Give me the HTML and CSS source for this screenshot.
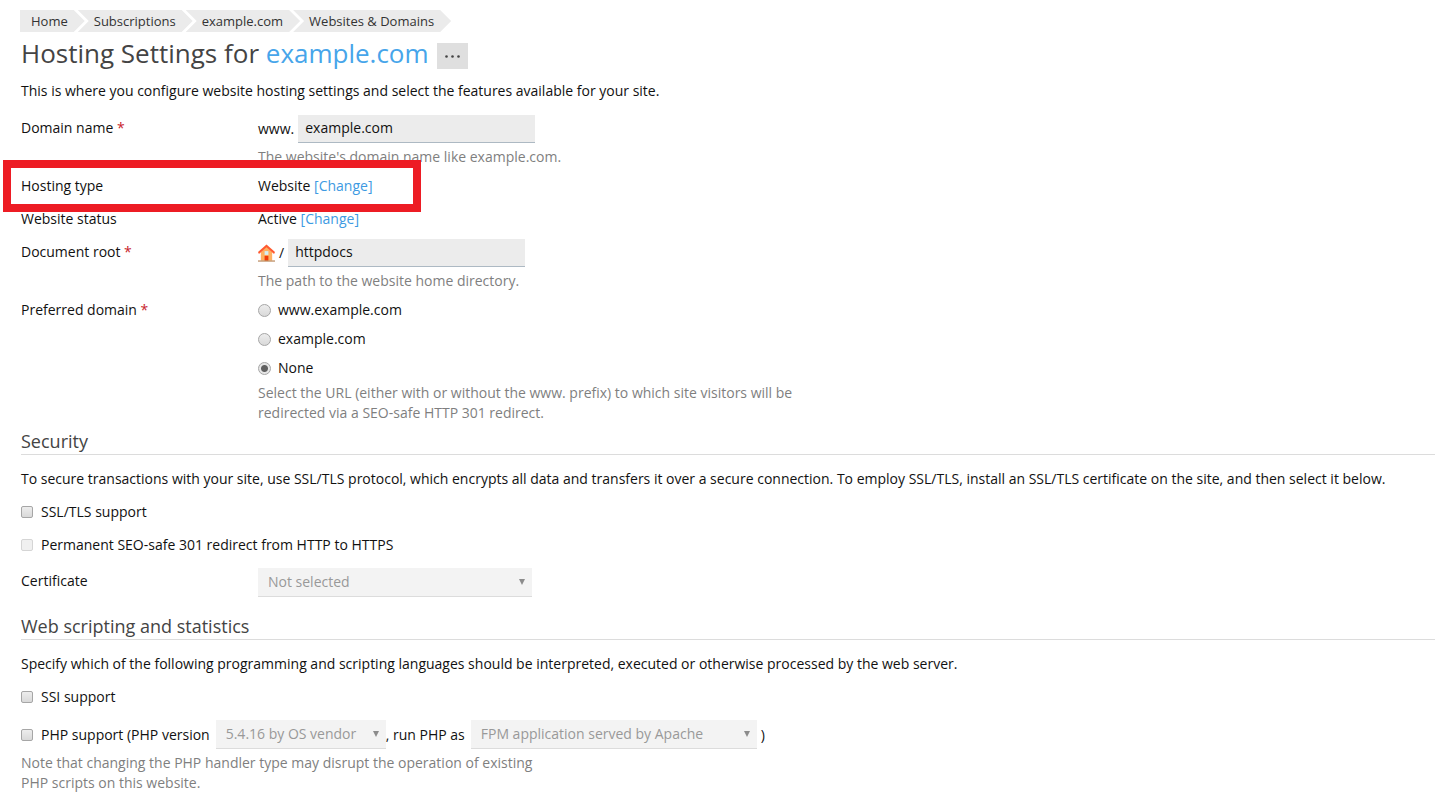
FILE: index.html
```html
<!DOCTYPE html>
<html lang="en">
<head>
    <meta charset="UTF-8">
    <title>Hosting Settings for example.com</title>
    <meta name="viewport" content="width=device-width, initial-scale=1.0">
    <link rel="stylesheet" href="styles.css">
</head>
<body>
    <nav class="pathbar">
        <a href="#">Home</a>
        <a href="#">Subscriptions</a>
        <a href="#">example.com</a>
        <a href="#">Websites &amp; Domains</a>
    </nav>

    <header class="heading">
        <h1>Hosting Settings for <a href="#">example.com</a></h1>
        <button type="button" class="btn-more" aria-label="More">
            <svg width="15" height="3" viewBox="0 0 15 3" fill="#444">
                <circle cx="1.5" cy="1.5" r="1.3"/>
                <circle cx="7.5" cy="1.5" r="1.3"/>
                <circle cx="13.5" cy="1.5" r="1.3"/>
            </svg>
        </button>
    </header>

    <form>
        <p class="intro">This is where you configure website hosting settings and select the features available for your site.</p>

        <div class="row row-input">
            <label class="name" for="domainName">Domain name <span class="required">*</span></label>
            <div class="value">
                <div class="line">
                    <span class="prefix">www.</span>
                    <input type="text" id="domainName" value="example.com">
                </div>
                <div class="hint">The website's domain name like example.com.</div>
            </div>
        </div>

        <div class="row highlight">
            <span class="name">Hosting type</span>
            <div class="value">Website <a href="#">[Change]</a></div>
        </div>

        <div class="row">
            <span class="name">Website status</span>
            <div class="value">Active <a href="#">[Change]</a></div>
        </div>

        <div class="row row-input">
            <label class="name" for="documentRoot">Document root <span class="required">*</span></label>
            <div class="value">
                <div class="line">
                    <span class="prefix home">
                        <svg width="17" height="18" viewBox="0 0 18 18">
                            <path d="M3 8l6-6 6 6v9H3z" fill="#ffb061"/>
                            <path d="M9 0l9 8-1 2-8-7-8 7-1-2z" fill="#ff5a30"/>
                            <path d="M7 7h4v4H7z" fill="#d5eef2"/>
                            <path d="M7 12h4v5H7z" fill="#f03a08"/>
                            <path d="M0 17h18v1H0z" fill="#a5662f"/>
                        </svg>
                        /
                    </span>
                    <input type="text" id="documentRoot" value="httpdocs">
                </div>
                <div class="hint">The path to the website home directory.</div>
            </div>
        </div>

        <div class="row" role="radiogroup" aria-labelledby="preferredLabel">
            <span class="name" id="preferredLabel">Preferred domain <span class="required">*</span></span>
            <div class="value">
                <div class="radios">
                    <label class="check"><input type="radio" name="preferred">www.example.com</label>
                    <label class="check"><input type="radio" name="preferred">example.com</label>
                    <label class="check"><input type="radio" name="preferred" checked>None</label>
                </div>
                <div class="hint">Select the URL (either with or without the www. prefix) to which site visitors will be redirected via a SEO-safe HTTP 301 redirect.</div>
            </div>
        </div>

        <section>
            <h2>Security</h2>
            <p>To secure transactions with your site, use SSL/TLS protocol, which encrypts all data and transfers it over a secure connection. To employ SSL/TLS, install an SSL/TLS certificate on the site, and then select it below.</p>
            <label class="check"><input type="checkbox">SSL/TLS support</label>
            <label class="check"><input type="checkbox" disabled>Permanent SEO-safe 301 redirect from HTTP to HTTPS</label>
            <div class="row row-input">
                <label class="name" for="certificate">Certificate</label>
                <div class="value">
                    <select id="certificate" class="select-certificate" disabled>
                        <option>Not selected</option>
                    </select>
                </div>
            </div>
        </section>

        <section>
            <h2>Web scripting and statistics</h2>
            <p>Specify which of the following programming and scripting languages should be interpreted, executed or otherwise processed by the web server.</p>
            <label class="check"><input type="checkbox">SSI support</label>
            <div class="php">
                <label class="check"><input type="checkbox">PHP support (PHP version</label>
                <select class="select-version" aria-label="PHP version" disabled>
                    <option>5.4.16 by OS vendor</option>
                </select>
                <label for="phpHandler">, run PHP as</label>
                <select id="phpHandler" class="select-handler" disabled>
                    <option>FPM application served by Apache</option>
                </select>
                <span class="bracket">)</span>
            </div>
            <div class="hint">Note that changing the PHP handler type may disrupt the operation of existing PHP scripts on this website.</div>
        </section>
    </form>
</body>
</html>
```
FILE: styles.css
```css
*, *::after {
    box-sizing: border-box;
}
body {
    margin: 0;
    padding: 10px 0 0 21px;
    background: #fff;
    color: #111;
    font: 14px/20px 'Open Sans', sans-serif;
}
a {
    color: #3d9ae2;
    text-decoration: none;
}
h1, h2, p {
    margin: 0;
    font-weight: normal;
}
input, select {
    margin: 0;
    font: inherit;
}

/* breadcrumbs */
.pathbar {
    display: flex;
    margin-left: -1px;
    font-size: 13px;
    line-height: 22px;
}
.pathbar a {
    padding: 0 17px 0 16px;
    margin-left: -7px;
    background: #ebebeb;
    color: #333;
    clip-path: polygon(0 0, calc(100% - 11px) 0, 100% 50%, calc(100% - 11px) 100%, 0 100%, 11px 50%);
}
.pathbar a:first-child {
    padding-left: 11px;
    margin-left: 0;
    clip-path: polygon(0 0, calc(100% - 11px) 0, 100% 50%, calc(100% - 11px) 100%, 0 100%);
}

.heading {
    display: flex;
    align-items: flex-end;
    gap: 8px;
    height: 37px;
}
h1 {
    font-size: 26px;
    line-height: 32px;
    color: #444;
}
h1 a {
    color: #47a5ea;
}
.btn-more {
    display: flex;
    align-items: center;
    justify-content: center;
    width: 31px;
    height: 26px;
    padding: 0;
    border: none;
    background: #dfdfdf;
    cursor: pointer;
}

/* form rows */
.intro {
    margin: 12px 0 17px;
}
.row {
    display: grid;
    grid-template-columns: 237px 1fr;
    margin-bottom: 13px;
}
.row-input {
    margin: -3px 0 9px;
}
.row-input .name {
    padding-top: 3px;
}
.required {
    color: #c8242b;
}
.line {
    display: flex;
    align-items: center;
    height: 28px;
    margin-bottom: 4px;
}
.prefix {
    padding-right: 4px;
}
.home {
    display: flex;
    align-items: center;
    gap: 4px;
}
input[type="text"] {
    width: 237px;
    height: 28px;
    padding: 0 7px 2px;
    border: none;
    border-bottom: 1px solid #adb9c3;
    background: #ececec;
    color: #111;
}
.hint {
    max-width: 570px;
    color: #7f7f7f;
}

/* call-out frame around the row */
.highlight {
    position: relative;
}
.highlight::after {
    content: "";
    position: absolute;
    top: -16px;
    left: -18px;
    width: 418px;
    height: 52px;
    border: 8px solid #ed1c24;
    pointer-events: none;
}

/* radios and checkboxes */
.radios {
    display: grid;
    gap: 9px;
    margin-bottom: 5px;
}
.check {
    display: flex;
    align-items: center;
}
input[type="radio"], input[type="checkbox"] {
    appearance: none;
    flex: none;
    width: 12px;
    height: 12px;
    margin-right: 8px;
    border: 1px solid #a6a6a6;
    border-radius: 2px;
    background: linear-gradient(#ededed, #d9d9d9);
}
input[type="radio"] {
    width: 13px;
    height: 13px;
    margin-right: 7px;
    border-radius: 50%;
}
input[type="radio"]:checked {
    background: radial-gradient(circle, #606060 3px, #e6e6e6 4px);
}
input[type="checkbox"]:disabled {
    border-color: #d5d5d5;
    background: #f0f0f0;
}

/* sections */
section {
    margin-top: -7px;
    margin-bottom: 24px;
}
section:last-child {
    margin-bottom: 0;
}
h2 {
    padding-bottom: 1px;
    margin-bottom: 14px;
    border-bottom: 1px solid #dcdcdc;
    font-size: 18px;
    line-height: 24px;
    color: #444;
}
section p, section > .check {
    margin-bottom: 13px;
}
section .row-input {
    padding-top: 3px;
}
select {
    appearance: none;
    height: 29px;
    padding: 0 10px;
    border: none;
    border-bottom: 1px solid #dcdcdc;
    border-radius: 0;
    background: #f3f3f3 url("data:image/svg+xml,%3Csvg xmlns='http://www.w3.org/2000/svg' width='6' height='6'%3E%3Cpath d='M0 0h6L3 6z' fill='%238c8c8c'/%3E%3C/svg%3E") no-repeat right 7px top 11px;
    color: #999;
}
select:disabled {
    opacity: 1;
}
.select-certificate {
    width: 274px;
}
.select-version {
    width: 170px;
    margin-left: 6px;
}
.select-handler {
    width: 286px;
    margin-left: 6px;
}
.php {
    display: flex;
    align-items: center;
    margin-bottom: 4px;
}
.bracket {
    margin-left: 4px;
}
section > .hint {
    max-width: 530px;
}
```
